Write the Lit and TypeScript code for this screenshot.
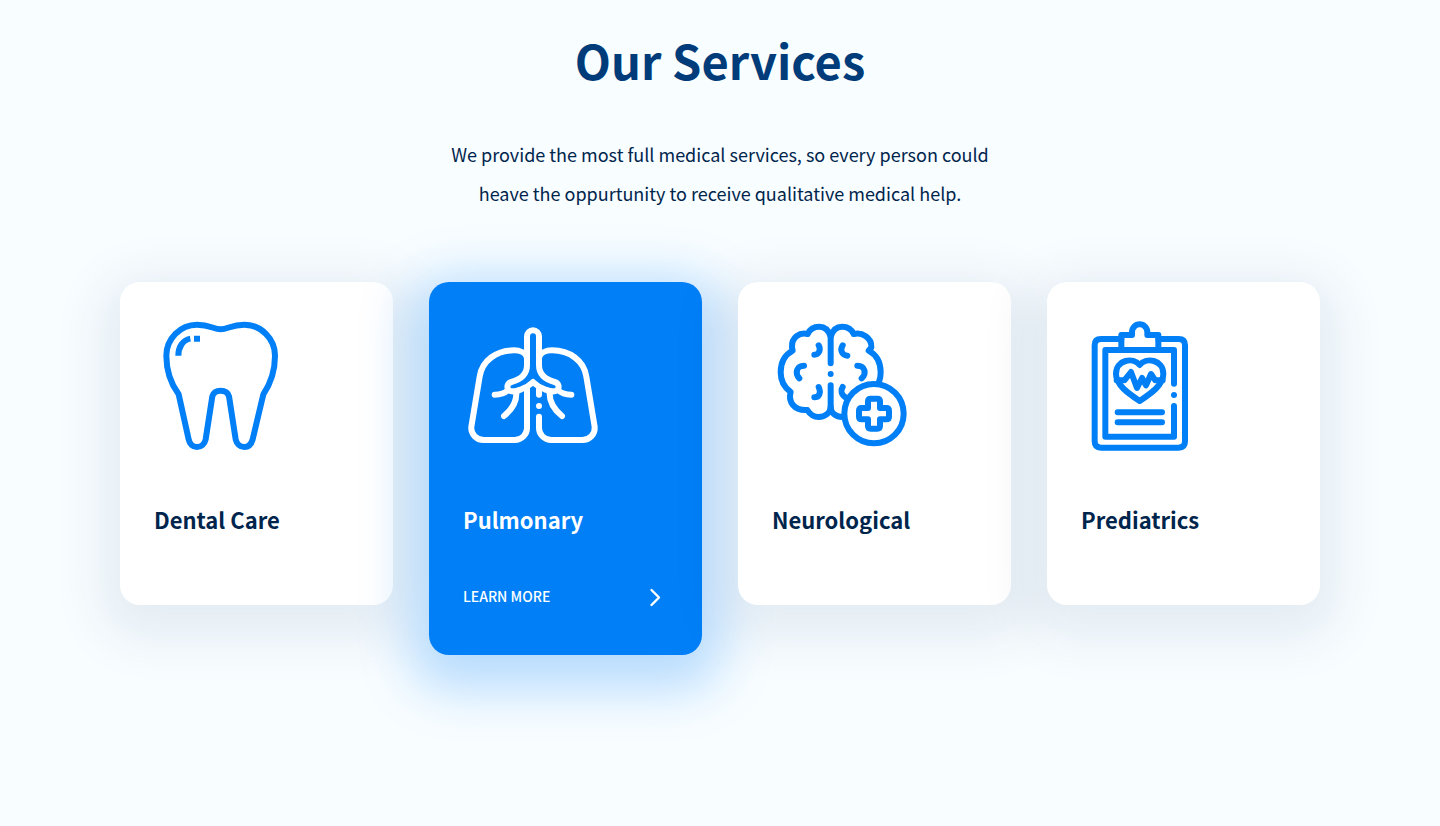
import { LitElement, html, svg, css, nothing } from "lit";
import { customElement, property } from "lit/decorators.js";

const tooth = svg`
  <path d="M212 58C234 58 243 44 283 44C333 44 375 86 375 137C375 180 362 220 340 253L308 388C304 402 295 411 283 411S260 402 257 388L237 259C234 248 224 242 212 242S190 248 187 259L167 388C164 402 153 411 141 411S119 402 116 388L86 253C62 220 49 180 49 137C49 86 91 44 141 44C181 44 190 58 212 58Z"/>
  <path stroke-linecap="butt" d="M85 137C85 112 98 90 121 86M132 86H150"/>`;

const lungs = svg`
  <path d="M207 165V79A18 18 0 0 1 243 79V165C243 190 260 208 290 216C302 219 305 232 298 240C290 248 275 243 260 238C245 232 235 226 225 216C215 226 205 232 190 238C175 243 160 248 152 240C145 232 148 219 160 216C190 208 207 190 207 165Z"/>
  <path d="M207 143C203 128 185 121 168 121C115 121 72 152 65 200L40 350C38 372 55 390 77 390H170C192 390 207 372 207 354V238"/>
  <path d="M243 143C247 128 265 121 282 121C335 121 378 152 385 200L410 350C412 372 395 390 373 390H280C258 390 243 372 243 354V320M243 288V288.1M243 238V254"/>
  <path d="M110 254C127 254 140 250 150 240M340 254C323 254 310 250 300 240M175 245C177 275 160 300 138 318M275 245C273 275 290 300 312 318"/>`;

const brain = svg`
  <path d="M188 160V80C182 60 170 50 154 50C138 50 125 58 119 72C95 66 70 82 72 112L74 122C50 135 38 160 38 187C38 212 48 232 68 246C60 275 78 303 118 300C126 313 138 321 152 321C172 321 188 308 188 290V226"/>
  <path d="M188 80C194 60 206 50 222 50C238 50 251 58 257 72C281 66 312 82 310 112L302 122C326 135 338 160 338 187C338 197 337 206 333 215M188 290C188 308 202 321 222 321M188 192V192.1"/>
  <path d="M152 106C160 120 152 134 139 134M224 106C215 120 222 136 238 137M108 167C85 167 80 190 94 205M268 167C291 167 297 190 281 205M152 231C160 248 154 262 139 262M224 231C218 240 219 253 232 262"/>
  <circle cx="318" cy="311" r="89"/>
  <path d="M308 266H328Q336 266 336 274V294H355Q363 294 363 302V320Q363 328 355 328H336V348Q336 356 328 356H308Q300 356 300 348V328H281Q273 328 273 320V302Q273 294 281 294H300V274Q300 266 308 266Z"/>`;

const clipboard = svg`
  <path d="M154 87H93Q74 87 74 106V394Q74 413 93 413H326Q345 413 345 394V106Q345 87 326 87H265"/>
  <path d="M154 118V75H186V66A23 23 0 0 1 232 66V75H265V118"/>
  <path d="M312 221V120H106V380H312V288M312 255V255.1"/>
  <path d="M209 165C190 141 138 148 138 192C138 225 175 250 209 273C243 250 280 225 280 192C280 148 228 141 209 165Z"/>
  <path d="M140 211H163L183 186L201 234L216 204L228 226L243 192L256 211H278M143 307H276M143 337H276"/>`;

interface Service {
  name: string;
  icon: unknown;
  left: number;
  active?: boolean;
}

const services: Service[] = [
  { name: "Dental Care", icon: tooth, left: 12 },
  { name: "Pulmonary", icon: lungs, left: 15, active: true },
  { name: "Neurological", icon: brain, left: 12 },
  { name: "Prediatrics", icon: clipboard, left: 33 },
];

@customElement("service-card")
export class ServiceCard extends LitElement {
  @property({ attribute: false }) service!: Service;
  @property({ type: Boolean, reflect: true }) active = false;

  static styles = css`
    :host {
      display: block;
      box-sizing: border-box;
      padding: 39px 34px 66px;
      border-radius: 20px;
      background: #fff;
      color: #00254d;
      box-shadow: 0 15px 50px 20px rgba(0, 50, 120, 0.08);
    }
    :host([active]) {
      padding-bottom: 44px;
      background: #007ff6;
      color: #fff;
      box-shadow: 0 15px 50px 20px rgba(0, 127, 246, 0.26);
    }
    .icon {
      display: block;
      width: 144px;
      height: 130px;
      fill: none;
      stroke: #007ff6;
      stroke-width: 18px;
      stroke-linecap: round;
      stroke-linejoin: round;
    }
    :host([active]) .icon {
      stroke: #fff;
    }
    .name {
      margin: 48px 0 0;
      font-size: 22px;
      font-weight: 700;
      line-height: 40px;
    }
    .more {
      display: flex;
      align-items: center;
      justify-content: space-between;
      margin-top: 42px;
      color: inherit;
      font-size: 14px;
      font-weight: 500;
      line-height: 30px;
      text-decoration: none;
    }
    .chevron {
      width: 24px;
      height: 24px;
      fill: none;
      stroke: currentColor;
      stroke-width: 2.4px;
      stroke-linecap: round;
      stroke-linejoin: round;
    }
  `;

  render() {
    const { name, icon, left } = this.service;
    return html`
      <svg class="icon" viewBox="${left} 33 432 390" aria-hidden="true">${icon}</svg>
      <h3 class="name">${name}</h3>
      ${this.active
        ? html`<a class="more" href="#">
            LEARN MORE
            <svg class="chevron" viewBox="0 0 24 24" aria-hidden="true"><path d="M7.5 6L15 13.5L7.5 21" /></svg>
          </a>`
        : nothing}
    `;
  }
}

@customElement("app-root")
export class AppRoot extends LitElement {
  static styles = css`
    :host {
      display: block;
      box-sizing: border-box;
      min-height: 100vh;
      padding: 24px 24px 96px;
      overflow: hidden;
      background: #f8fdff;
      font-family: "Noto Sans CJK SC", "Noto Sans CJK JP", sans-serif;
      color: #00254d;
    }
    .title {
      margin: 0;
      color: #003c7a;
      font-size: 47px;
      font-weight: 700;
      line-height: 72px;
      text-align: center;
    }
    .intro {
      max-width: 560px;
      margin: 39px auto 0;
      font-size: 18px;
      line-height: 39px;
      text-align: center;
    }
    .cards {
      display: grid;
      grid-template-columns: repeat(auto-fit, minmax(240px, 1fr));
      gap: 36px;
      align-items: start;
      max-width: 1200px;
      margin: 69px auto 0;
    }
  `;

  render() {
    return html`
      <h2 class="title">Our Services</h2>
      <p class="intro">
        We provide the most full medical services, so every person could heave the oppurtunity to receive qualitative
        medical help.
      </p>
      <div class="cards">
        ${services.map((s) => html`<service-card .service=${s} ?active=${s.active}></service-card>`)}
      </div>
    `;
  }
}
